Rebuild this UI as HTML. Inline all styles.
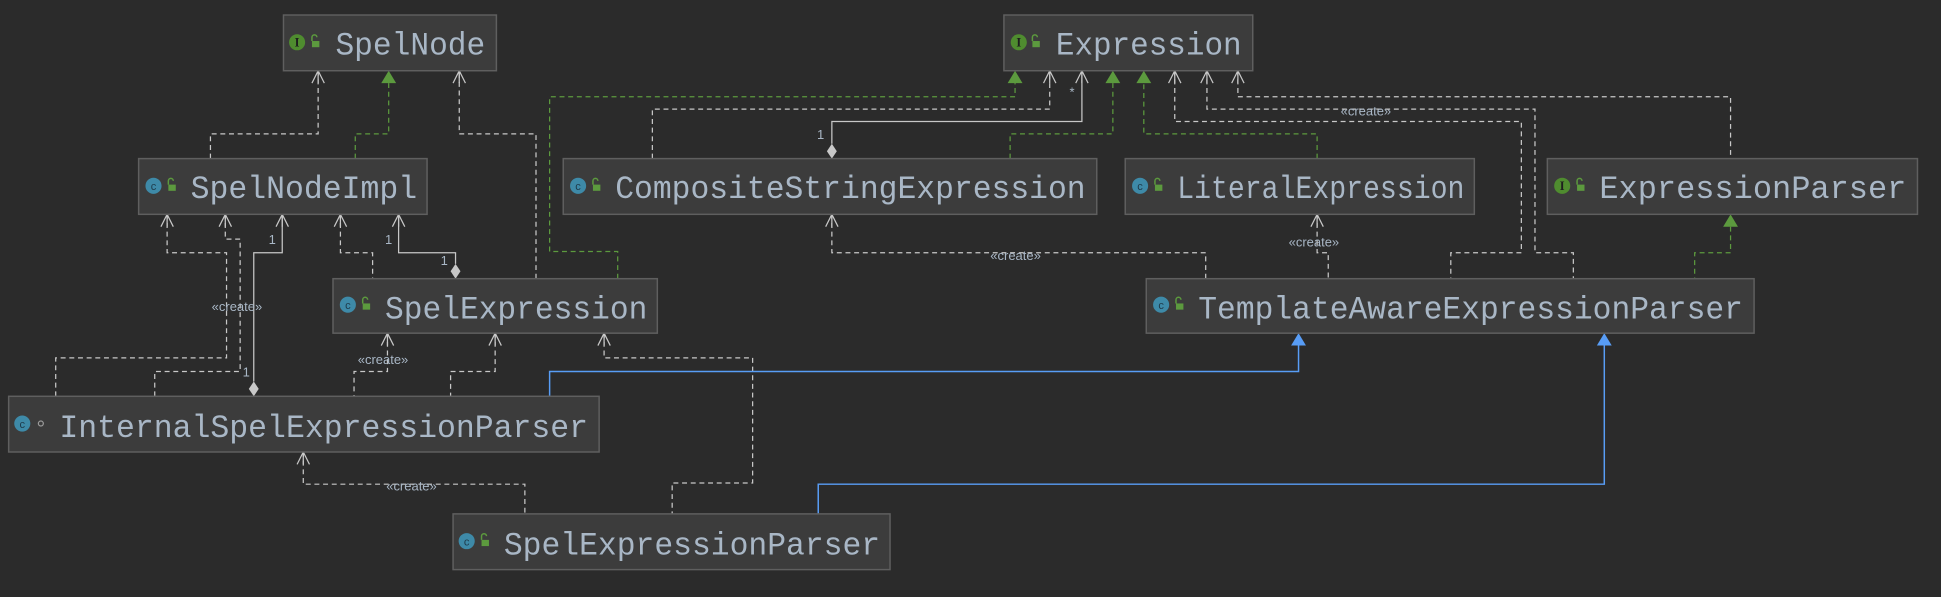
<!DOCTYPE html>
<html><head><meta charset="utf-8"><style>
html,body{margin:0;padding:0;background:#2b2b2b;width:1941px;height:597px;overflow:hidden}
svg{display:block}
.box{fill:#3c3c3c;stroke:#5f5f5f;stroke-width:1.2}
.t{font-family:"Liberation Mono","DejaVu Sans Mono",monospace;font-size:26px;fill:#a9b7c6}
.w{fill:none;stroke:#c8c8c8;stroke-width:1;stroke-dasharray:4 3}
.s{fill:none;stroke:#c8c8c8;stroke-width:1}
.g{fill:none;stroke:#5c9a3e;stroke-width:1;stroke-dasharray:4 3}
.b{fill:none;stroke:#589df6;stroke-width:1.2}
.lab{font-family:"Liberation Sans",sans-serif;font-size:10.5px;fill:#a9b7c6}
.ar{fill:none;stroke:#c8c8c8;stroke-width:1}
</style></head><body>
<svg width="1941" height="597" viewBox="0 0 1568 482" xmlns="http://www.w3.org/2000/svg">
<defs>
<g id="open"><path class="ar" d="M-5,10 L0,0 L5,10 M0,0 L0,10"/></g>
<g id="gtri"><path d="M-6,10 L0,0 L6,10 Z" fill="#5c9a3e"/></g>
<g id="btri"><path d="M-6,10 L0,0 L6,10 Z" fill="#589df6"/></g>
<g id="dia"><path d="M0,0 L4,6 L0,12 L-4,6 Z" fill="#c8c8c8"/></g>
<g id="ii"><circle r="6.5" fill="#4f8c2f"/><text x="0" y="3.5" text-anchor="middle" font-family="Liberation Serif,serif" font-size="10" font-weight="bold" fill="#1e1e1e">I</text></g>
<g id="cc"><circle r="6.5" fill="#3e8aa8"/><text x="0" y="3.5" text-anchor="middle" font-family="Liberation Sans,sans-serif" font-size="9" fill="#1e3a4a">c</text></g>
<g id="lk"><rect x="-3" y="0" width="6" height="5" fill="#5c9a3e"/><path d="M-3,0 V-3 A2,2 0 0 1 1,-3" fill="none" stroke="#5c9a3e" stroke-width="1.2"/></g>
</defs>

<path class="w" d="M170,128 V108 H257 V57"/><use href="#open" x="257" y="57"/>
<path class="g" d="M287,128 V108 H314 V67"/><use href="#gtri" x="314" y="57"/>
<path class="w" d="M433,225 V108 H371 V57"/><use href="#open" x="371" y="57"/>
<path class="g" d="M499,225 V203 H444 V78 H820 V67"/><use href="#gtri" x="820" y="57"/>
<path class="w" d="M527,128 V88 H848 V57"/><use href="#open" x="848" y="57"/>
<path class="s" d="M672,116 V98 H874 V57"/><use href="#open" x="874" y="57"/><use href="#dia" x="672" y="116"/>
<text class="lab" x="660" y="112">1</text><text class="lab" x="864" y="78">*</text>
<path class="g" d="M816,128 V108 H899 V67"/><use href="#gtri" x="899" y="57"/>
<path class="g" d="M1064,128 V108 H924 V67"/><use href="#gtri" x="924" y="57"/>
<path class="w" d="M949,57 V98 H1229 V204 H1172 V225"/><use href="#open" x="949" y="57"/>
<path class="w" d="M975,57 V88 H1240 V204 H1271 V225"/><use href="#open" x="975" y="57"/>
<text class="lab" x="1083" y="93">«create»</text>
<path class="w" d="M1000,57 V78 H1398 V128"/><use href="#open" x="1000" y="57"/>
<path class="g" d="M1398,183 V204 H1369 V225"/><use href="#gtri" x="1398" y="173"/>
<path class="w" d="M1064,173 V204 H1073 V225"/><use href="#open" x="1064" y="173"/>
<text class="lab" x="1041" y="199">«create»</text>
<path class="w" d="M672,173 V204 H974 V225"/><use href="#open" x="672" y="173"/>
<text class="lab" x="800" y="210">«create»</text>

<path class="w" d="M135,173 V204 H183 V289 H45 V320"/><use href="#open" x="135" y="173"/>
<path class="w" d="M182,173 V193 H194 V300 H125 V320"/><use href="#open" x="182" y="173"/>
<path class="s" d="M228,173 V204 H205 V308"/><use href="#open" x="228" y="173"/><use href="#dia" x="205" y="308"/>
<text class="lab" x="217" y="197">1</text><text class="lab" x="196" y="304">1</text>
<text class="lab" x="171" y="251">«create»</text>
<path class="w" d="M275,173 V204 H301 V225"/><use href="#open" x="275" y="173"/>
<path class="s" d="M322,173 V204 H368 V213"/><use href="#open" x="322" y="173"/><use href="#dia" x="368" y="213"/>
<text class="lab" x="311" y="197">1</text><text class="lab" x="356" y="214">1</text>
<path class="w" d="M313,269 V300 H286 V320"/><use href="#open" x="313" y="269"/>
<text class="lab" x="289" y="294">«create»</text>
<path class="w" d="M400,269 V300 H364 V320"/><use href="#open" x="400" y="269"/>
<path class="w" d="M488,269 V289 H608 V390 H543 V415"/><use href="#open" x="488" y="269"/>
<path class="w" d="M245,365 V391 H424 V415"/><use href="#open" x="245" y="365"/>
<text class="lab" x="312" y="396">«create»</text>
<path class="b" d="M444,320 V300 H1049 V279"/><use href="#btri" x="1049" y="269"/>
<path class="b" d="M661,415 V391 H1296 V279"/><use href="#btri" x="1296" y="269"/>

<rect class="box" x="229" y="12" width="172" height="45"/>
<use href="#ii" x="240" y="34"/><use href="#lk" x="255" y="33"/>
<text class="t" x="271" y="44" textLength="121" lengthAdjust="spacingAndGlyphs">SpelNode</text>

<rect class="box" x="811" y="12" width="201" height="45"/>
<use href="#ii" x="823" y="34"/><use href="#lk" x="837" y="33"/>
<text class="t" x="853" y="44" textLength="150" lengthAdjust="spacingAndGlyphs">Expression</text>

<rect class="box" x="112" y="128" width="233" height="45"/>
<use href="#cc" x="124" y="150"/><use href="#lk" x="139" y="149"/>
<text class="t" x="154" y="160" textLength="183" lengthAdjust="spacingAndGlyphs">SpelNodeImpl</text>

<rect class="box" x="455" y="128" width="431" height="45"/>
<use href="#cc" x="467" y="150"/><use href="#lk" x="482" y="149"/>
<text class="t" x="497" y="160" textLength="380" lengthAdjust="spacingAndGlyphs">CompositeStringExpression</text>

<rect class="box" x="909" y="128" width="282" height="45"/>
<use href="#cc" x="921" y="150"/><use href="#lk" x="936" y="149"/>
<text class="t" x="951" y="160" textLength="232" lengthAdjust="spacingAndGlyphs">LiteralExpression</text>

<rect class="box" x="1250" y="128" width="299" height="45"/>
<use href="#ii" x="1262" y="150"/><use href="#lk" x="1277" y="149"/>
<text class="t" x="1292" y="160" textLength="248" lengthAdjust="spacingAndGlyphs">ExpressionParser</text>

<rect class="box" x="269" y="225" width="262" height="44"/>
<use href="#cc" x="281" y="246"/><use href="#lk" x="296" y="245"/>
<text class="t" x="311" y="257" textLength="212" lengthAdjust="spacingAndGlyphs">SpelExpression</text>

<rect class="box" x="926" y="225" width="491" height="44"/>
<use href="#cc" x="938" y="246"/><use href="#lk" x="953" y="245"/>
<text class="t" x="968" y="257" textLength="440" lengthAdjust="spacingAndGlyphs">TemplateAwareExpressionParser</text>

<rect class="box" x="7" y="320" width="477" height="45"/>
<use href="#cc" x="18" y="342"/><circle cx="33" cy="342" r="2" fill="none" stroke="#9a9a9a"/>
<text class="t" x="48" y="353" textLength="427" lengthAdjust="spacingAndGlyphs">InternalSpelExpressionParser</text>

<rect class="box" x="366" y="415" width="353" height="45"/>
<use href="#cc" x="377" y="437"/><use href="#lk" x="392" y="436"/>
<text class="t" x="407" y="448" textLength="304" lengthAdjust="spacingAndGlyphs">SpelExpressionParser</text>
</svg>
</body></html>
